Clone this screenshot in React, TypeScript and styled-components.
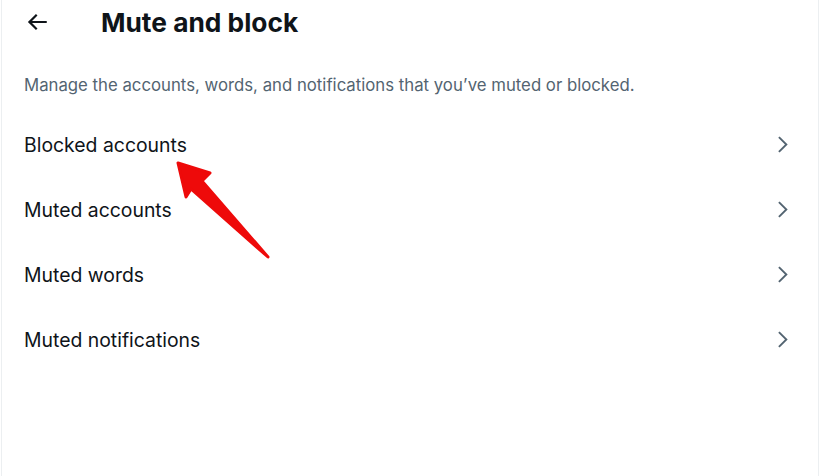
import React from "react";
import styled, { createGlobalStyle } from "styled-components";

const Global = createGlobalStyle`
  html, body { margin: 0; padding: 0; background: #ffffff; }
  body { font-family: Inter, "Noto Sans", sans-serif; -webkit-font-smoothing: antialiased; }
`;

const Page = styled.div`
  position: relative;
  box-sizing: border-box;
  width: 818px;
  height: 476px;
  margin-left: 1px;
  border-left: 1px solid #eceff1;
  border-right: 1px solid #eceff1;
  background: #fff;
  overflow: hidden;
`;

const Header = styled.div`
  display: flex;
  align-items: center;
  height: 44px;
  padding-left: 22px;
`;

const BackButton = styled.div`
  width: 26px;
  height: 26px;
  display: flex;
  align-items: center;
  justify-content: center;
  color: #0f1419;
`;

const Title = styled.h1`
  margin: 0 0 0 51px;
  font-size: 26.3px;
  font-weight: 700;
  color: #0f1419;
`;

const Description = styled.p`
  margin: 0;
  padding: 31px 23px 0 22px;
  font-size: 16.75px;
  line-height: 20px;
  color: #536471;
`;

const List = styled.div`
  display: flex;
  flex-direction: column;
  padding-top: 17px;
`;

const Row = styled.div`
  display: flex;
  align-items: center;
  justify-content: space-between;
  height: 65px;
  padding: 0 24px 0 22px;
  font-size: 19.4px;
  color: #0f1419;
`;

const Chevron = styled.svg`
  width: 23px;
  height: 23px;
  color: #536471;
`;

const Annotation = styled.svg`
  position: absolute;
  left: 0;
  top: 0;
  pointer-events: none;
`;

const items = ["Blocked accounts", "Muted accounts", "Muted words", "Muted notifications"];

export default function App() {
  return (
    <>
      <Global />
      <Page>
        <Header>
          <BackButton>
            <svg width="26" height="26" viewBox="0 0 24 24" fill="currentColor">
              <path d="M7.414 13l5.043 5.04-1.414 1.42L3.586 12l7.457-7.46 1.414 1.42L7.414 11H21v2H7.414z" />
            </svg>
          </BackButton>
          <Title>Mute and block</Title>
        </Header>
        <Description>
          Manage the accounts, words, and notifications that you’ve muted or blocked.
        </Description>
        <List>
          {items.map((t) => (
            <Row key={t}>
              <span>{t}</span>
              <Chevron viewBox="0 0 24 24" fill="currentColor">
                <path d="M14.586 12L7.543 4.96l1.414-1.42L17.414 12l-8.457 8.46-1.414-1.42L14.586 12z" />
              </Chevron>
            </Row>
          ))}
        </List>
        <Annotation width="818" height="476" viewBox="1 0 818 476">
          <path
            d="M177,163 L209,173 L201,181 L267,257 L190,189 L185,197 Z"
            fill="#ee0a0a"
            stroke="#ee0a0a"
            strokeWidth="3"
            strokeLinejoin="round"
          />
        </Annotation>
      </Page>
    </>
  );
}
